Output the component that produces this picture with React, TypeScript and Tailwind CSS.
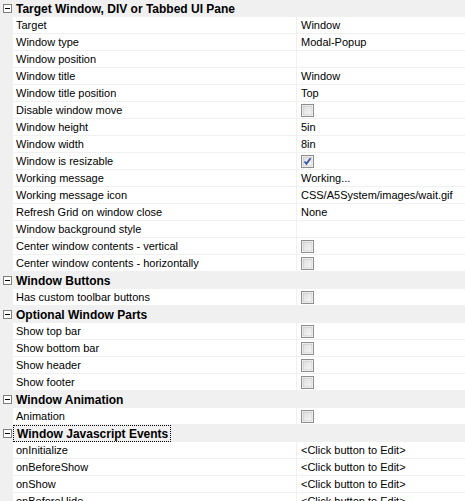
import React from "react";

type Row =
  | { kind: "cat"; title: string; focus?: boolean }
  | { kind: "prop"; label: string; value?: string; check?: boolean; checked?: boolean };

const rows: Row[] = [
  { kind: "cat", title: "Target Window, DIV or Tabbed UI Pane" },
  { kind: "prop", label: "Target", value: "Window" },
  { kind: "prop", label: "Window type", value: "Modal-Popup" },
  { kind: "prop", label: "Window position" },
  { kind: "prop", label: "Window title", value: "Window" },
  { kind: "prop", label: "Window title position", value: "Top" },
  { kind: "prop", label: "Disable window move", check: true },
  { kind: "prop", label: "Window height", value: "5in" },
  { kind: "prop", label: "Window width", value: "8in" },
  { kind: "prop", label: "Window is resizable", check: true, checked: true },
  { kind: "prop", label: "Working message", value: "Working..." },
  { kind: "prop", label: "Working message icon", value: "CSS/A5System/images/wait.gif" },
  { kind: "prop", label: "Refresh Grid on window close", value: "None" },
  { kind: "prop", label: "Window background style" },
  { kind: "prop", label: "Center window contents - vertical", check: true },
  { kind: "prop", label: "Center window contents - horizontally", check: true },
  { kind: "cat", title: "Window Buttons" },
  { kind: "prop", label: "Has custom toolbar buttons", check: true },
  { kind: "cat", title: "Optional Window Parts" },
  { kind: "prop", label: "Show top bar", check: true },
  { kind: "prop", label: "Show bottom bar", check: true },
  { kind: "prop", label: "Show header", check: true },
  { kind: "prop", label: "Show footer", check: true },
  { kind: "cat", title: "Window Animation" },
  { kind: "prop", label: "Animation", check: true },
  { kind: "cat", title: "Window Javascript Events", focus: true },
  { kind: "prop", label: "onInitialize", value: "<Click button to Edit>" },
  { kind: "prop", label: "onBeforeShow", value: "<Click button to Edit>" },
  { kind: "prop", label: "onShow", value: "<Click button to Edit>" },
  { kind: "prop", label: "onBeforeHide", value: "<Click button to Edit>" },
];

// little boxed minus used to collapse a category
const Minus = () => (
  <svg width="9" height="9" viewBox="0 0 9 9" className="block">
    <rect x="0.5" y="0.5" width="8" height="8" fill="#fff" stroke="#808080" />
    <line x1="2" y1="4.5" x2="7" y2="4.5" stroke="#000" />
  </svg>
);

const CheckBox = ({ checked }: { checked?: boolean }) => (
  <svg width="13" height="13" viewBox="0 0 13 13" className="block">
    <defs>
      <linearGradient id="cbg" x1="0" y1="0" x2="1" y2="1">
        <stop offset="0" stopColor="#dcdcdc" />
        <stop offset="1" stopColor="#f8f8f8" />
      </linearGradient>
    </defs>
    <rect x="0.5" y="0.5" width="12" height="12" fill="#fff" stroke="#8e8f8f" />
    <rect x="2" y="2" width="9" height="9" fill="url(#cbg)" stroke="#b0b0b0" strokeWidth="0.5" />
    {checked && (
      <path d="M3.5 6.5 L5.5 8.8 L9.5 3.2" fill="none" stroke="#3a52a8" strokeWidth="1.8" />
    )}
  </svg>
);

export default function App() {
  return (
    <div
      className="w-[465px] h-[501px] overflow-hidden bg-[#f0f0f0] text-[11px] text-black"
      style={{ fontFamily: '"Liberation Sans", Arial, sans-serif' }}
    >
      {rows.map((row, i) =>
        row.kind === "cat" ? (
          <div key={i} className="flex h-[17px] items-center">
            <div className="flex w-[13px] shrink-0 justify-center pl-[1px]">
              <Minus />
            </div>
            <div
              className={
                "flex h-[17px] items-center pl-[3px] pr-[2px] text-[12px] font-bold " +
                (row.focus ? "border border-dotted border-black" : "")
              }
            >
              {row.title}
            </div>
          </div>
        ) : (
          <div key={i} className="flex h-[17px]">
            <div className="w-[13px] shrink-0" />
            <div className="flex w-[284px] shrink-0 items-center border-b border-r border-[#f0f0f0] bg-white pl-[3px]">
              {row.label}
            </div>
            <div className="flex flex-1 items-center border-b border-[#f0f0f0] bg-white pl-[4px]">
              {row.check ? <CheckBox checked={row.checked} /> : row.value}
            </div>
          </div>
        )
      )}
    </div>
  );
}
